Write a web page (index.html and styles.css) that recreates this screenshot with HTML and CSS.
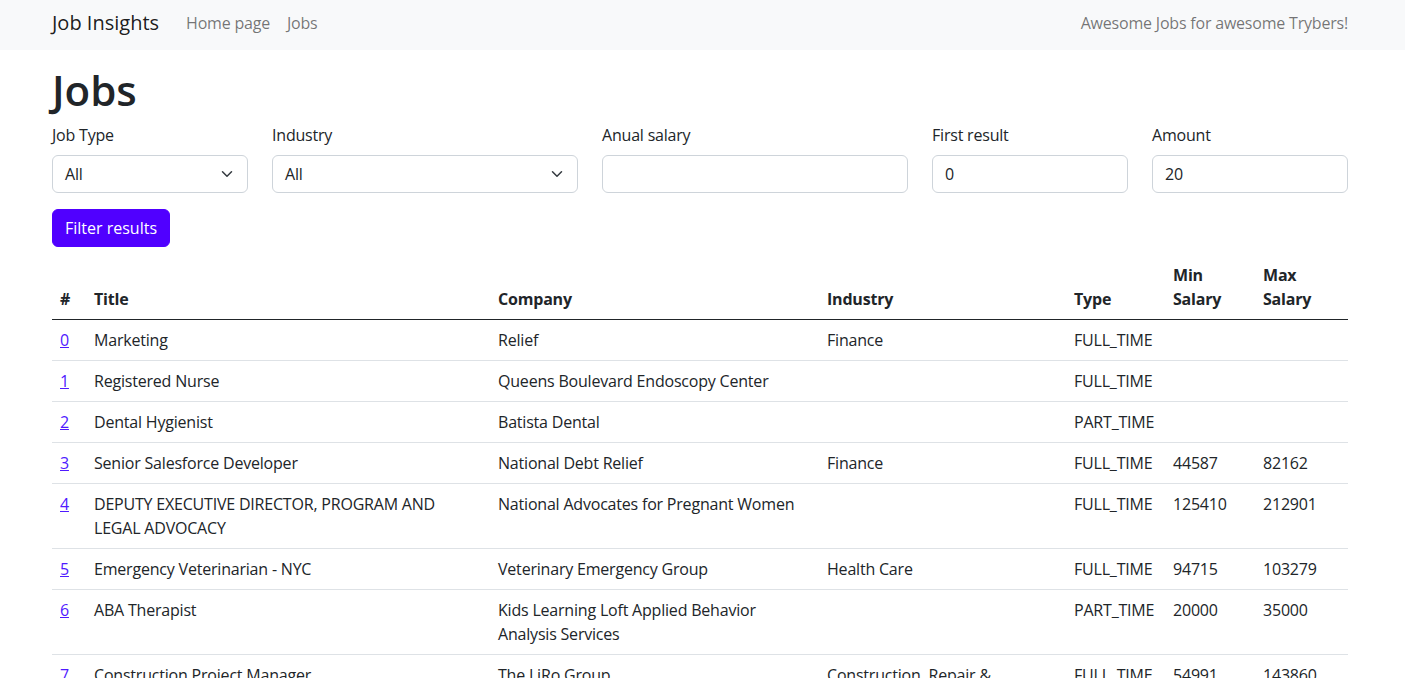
FILE: index.html
```html
<!DOCTYPE html>
<html lang="en">
<head>
<meta charset="utf-8">
<title>Job Insights</title>
<link rel="stylesheet" href="styles.css">
</head>
<body>
<nav class="navbar">
  <div class="nav-inner">
    <div class="nav-left">
      <a class="brand" href="#">Job Insights</a>
      <a class="nav-link" href="#">Home page</a>
      <a class="nav-link" href="#">Jobs</a>
    </div>
    <span class="nav-text">Awesome Jobs for awesome Trybers!</span>
  </div>
</nav>
<main class="container">
  <h1 class="title">Jobs</h1>
  <form class="filters">
    <div class="fields">
      <div class="field">
        <label class="label">Job Type</label>
        <div class="select"><span>All</span>
          <svg class="chev" width="16" height="12" viewBox="0 0 16 16"><path d="M2 5l6 6 6-6" fill="none" stroke="#343a40" stroke-width="2" stroke-linecap="round" stroke-linejoin="round"/></svg>
        </div>
      </div>
      <div class="field">
        <label class="label">Industry</label>
        <div class="select"><span>All</span>
          <svg class="chev" width="16" height="12" viewBox="0 0 16 16"><path d="M2 5l6 6 6-6" fill="none" stroke="#343a40" stroke-width="2" stroke-linecap="round" stroke-linejoin="round"/></svg>
        </div>
      </div>
      <div class="field">
        <label class="label">Anual salary</label>
        <div class="input"></div>
      </div>
      <div class="field">
        <label class="label">First result</label>
        <div class="input">0</div>
      </div>
      <div class="field">
        <label class="label">Amount</label>
        <div class="input">20</div>
      </div>
    </div>
    <button class="btn" type="button">Filter results</button>
  </form>
  <table class="jobs">
    <colgroup>
      <col class="c-id"><col class="c-title"><col class="c-company"><col class="c-industry"><col class="c-type"><col class="c-min"><col class="c-max">
    </colgroup>
    <thead>
      <tr><th>#</th><th>Title</th><th>Company</th><th>Industry</th><th>Type</th><th>Min Salary</th><th>Max Salary</th></tr>
    </thead>
    <tbody>
      <tr><td><a href="#">0</a></td><td>Marketing</td><td>Relief</td><td>Finance</td><td>FULL_TIME</td><td></td><td></td></tr>
      <tr><td><a href="#">1</a></td><td>Registered Nurse</td><td>Queens Boulevard Endoscopy Center</td><td></td><td>FULL_TIME</td><td></td><td></td></tr>
      <tr><td><a href="#">2</a></td><td>Dental Hygienist</td><td>Batista Dental</td><td></td><td>PART_TIME</td><td></td><td></td></tr>
      <tr><td><a href="#">3</a></td><td>Senior Salesforce Developer</td><td>National Debt Relief</td><td>Finance</td><td>FULL_TIME</td><td>44587</td><td>82162</td></tr>
      <tr><td><a href="#">4</a></td><td>DEPUTY EXECUTIVE DIRECTOR, PROGRAM AND LEGAL ADVOCACY</td><td>National Advocates for Pregnant Women</td><td></td><td>FULL_TIME</td><td>125410</td><td>212901</td></tr>
      <tr><td><a href="#">5</a></td><td>Emergency Veterinarian - NYC</td><td>Veterinary Emergency Group</td><td>Health Care</td><td>FULL_TIME</td><td>94715</td><td>103279</td></tr>
      <tr><td><a href="#">6</a></td><td>ABA Therapist</td><td>Kids Learning Loft Applied Behavior Analysis Services</td><td></td><td>PART_TIME</td><td>20000</td><td>35000</td></tr>
      <tr><td><a href="#">7</a></td><td>Construction Project Manager</td><td>The LiRo Group</td><td>Construction, Repair &amp; Maintenance</td><td>FULL_TIME</td><td>54991</td><td>143860</td></tr>
      <tr><td><a href="#">8</a></td><td>Registered Nurse</td><td>Kindred Healthcare</td><td>Health Care</td><td>FULL_TIME</td><td></td><td></td></tr>
    </tbody>
  </table>
</main>
</body>
</html>
```

FILE: styles.css
```css
* { box-sizing: border-box; }
html, body { margin: 0; padding: 0; }
body {
  font-family: "Open Sans", "Noto Sans", "Liberation Sans", sans-serif;
  font-size: 16px;
  line-height: 24px;
  color: #212529;
  background: #fff;
  letter-spacing: -0.2px;
}
.navbar {
  background: #f8f9fa;
  height: 50px;
}
.nav-inner {
  width: 1296px;
  margin-left: 52px;
  height: 50px;
  padding-bottom: 4px;
  display: flex;
  align-items: center;
  justify-content: space-between;
}
.nav-left { display: flex; align-items: center; }
.brand {
  font-size: 20px;
  line-height: 30px;
  color: rgba(0,0,0,.9);
  text-decoration: none;
  margin-right: 27px;
  letter-spacing: 0;
}
.nav-link {
  color: rgba(0,0,0,.55);
  text-decoration: none;
  margin-right: 17px;
}
.nav-text { color: rgba(0,0,0,.55); }
.container {
  width: 1296px;
  margin-left: 52px;
}
.title {
  font-size: 42px;
  line-height: 48px;
  font-weight: 600;
  margin: 16px 0 9px;
  letter-spacing: 0;
}
.fields {
  display: grid;
  grid-template-columns: 196px 306px 306px 196px 196px;
  column-gap: 24px;
}
.label {
  display: block;
  margin-bottom: 8px;
}
.select, .input {
  height: 38px;
  border: 1px solid #ced4da;
  border-radius: 6px;
  padding: 6px 12px;
  display: flex;
  align-items: center;
  justify-content: space-between;
  background: #fff;
}
.chev { display: block; }
.btn {
  margin-top: 16px;
  background: #5000ff;
  color: #fff;
  border: 1px solid #5000ff;
  border-radius: 6px;
  height: 38px;
  padding: 6px 12px;
  font: inherit;
  letter-spacing: 0;
}
.jobs {
  margin-top: 8px;
  width: 1296px;
  border-collapse: collapse;
  table-layout: fixed;
}
.c-id { width: 34px; }
.c-title { width: 404px; }
.c-company { width: 329px; }
.c-industry { width: 247px; }
.c-type { width: 99px; }
.c-min { width: 90px; }
.c-max { width: 93px; }
.jobs th, .jobs td {
  padding: 8px;
  text-align: left;
  vertical-align: top;
}
.jobs th {
  vertical-align: bottom;
  font-weight: 700;
  border-bottom: 1px solid #212529;
}
.jobs td {
  border-bottom: 1px solid #dee2e6;
}
.jobs td:nth-child(5) { white-space: nowrap; }
.jobs a { color: #4f1aff; }
```
